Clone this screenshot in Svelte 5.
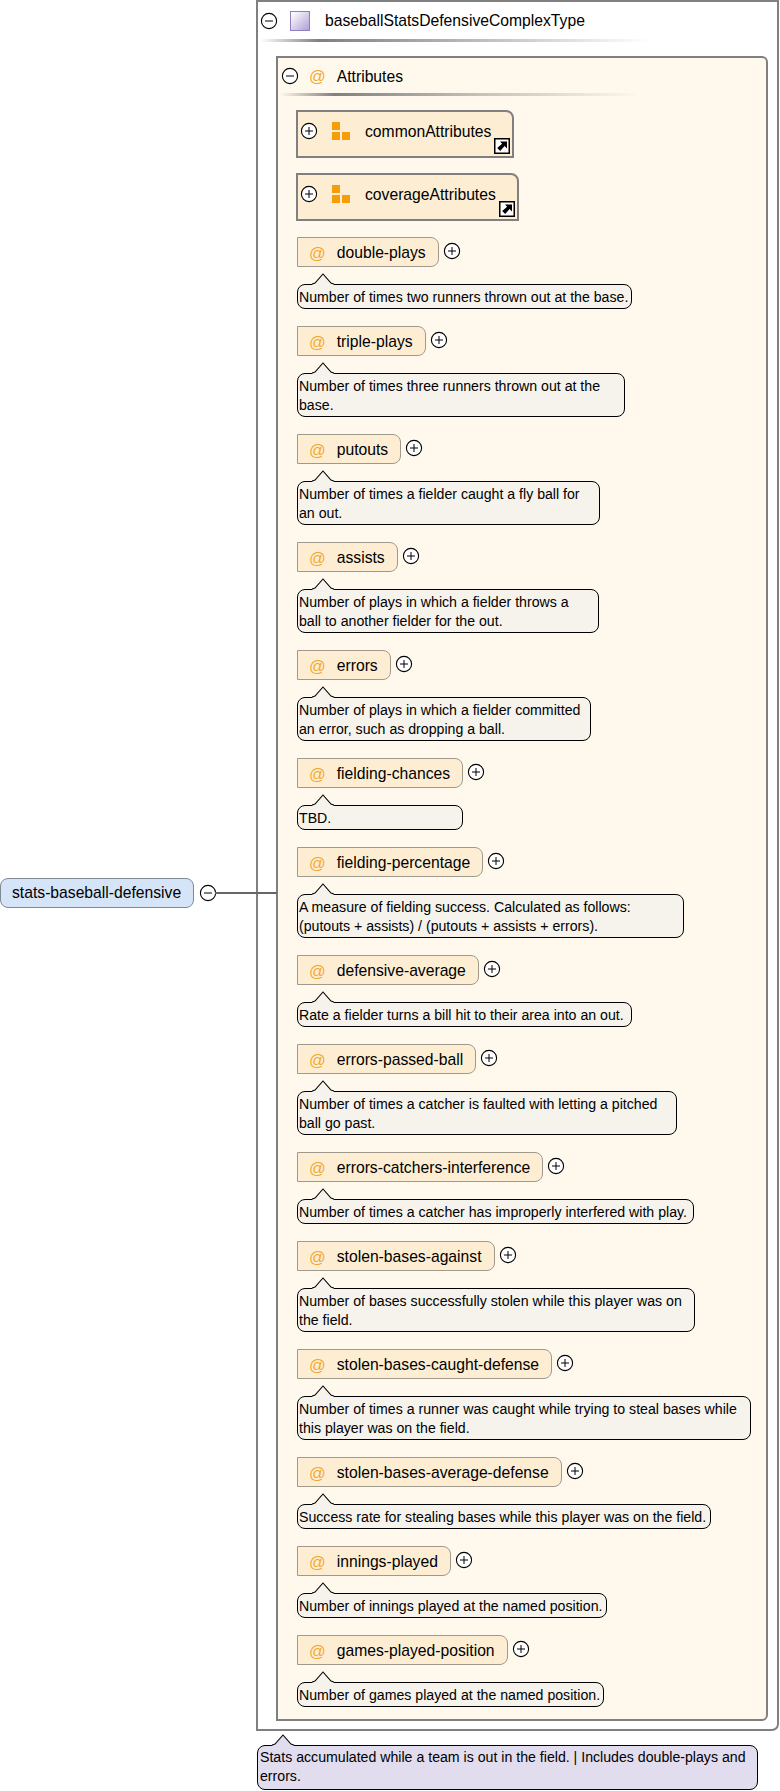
<script>
  const groups = [
    { name: 'commonAttributes' },
    { name: 'coverageAttributes' }
  ];

  // note widths come straight from the diagram, the tool sizes them itself
  const attrs = [
    { name: 'double-plays', w: 335, lines: ['Number of times two runners thrown out at the base.'] },
    { name: 'triple-plays', w: 328, lines: ['Number of times three runners thrown out at the', 'base.'] },
    { name: 'putouts', w: 303, lines: ['Number of times a fielder caught a fly ball for', 'an out.'] },
    { name: 'assists', w: 302, lines: ['Number of plays in which a fielder throws a', 'ball to another fielder for the out.'] },
    { name: 'errors', w: 294, lines: ['Number of plays in which a fielder committed', 'an error, such as dropping a ball.'] },
    { name: 'fielding-chances', w: 166, lines: ['TBD.'] },
    { name: 'fielding-percentage', w: 387, lines: ['A measure of fielding success. Calculated as follows:', '(putouts + assists) / (putouts + assists + errors).'] },
    { name: 'defensive-average', w: 335, lines: ['Rate a fielder turns a bill hit to their area into an out.'] },
    { name: 'errors-passed-ball', w: 380, lines: ['Number of times a catcher is faulted with letting a pitched', 'ball go past.'] },
    { name: 'errors-catchers-interference', w: 397, lines: ['Number of times a catcher has improperly interfered with play.'] },
    { name: 'stolen-bases-against', w: 398, lines: ['Number of bases successfully stolen while this player was on', 'the field.'] },
    { name: 'stolen-bases-caught-defense', w: 454, lines: ['Number of times a runner was caught while trying to steal bases while', 'this player was on the field.'] },
    { name: 'stolen-bases-average-defense', w: 414, lines: ['Success rate for stealing bases while this player was on the field.'] },
    { name: 'innings-played', w: 310, lines: ['Number of innings played at the named position.'] },
    { name: 'games-played-position', w: 307, lines: ['Number of games played at the named position.'] }
  ];
</script>

{#snippet toggle(open)}
  <svg class="toggle" viewBox="0 0 18 18" width="18" height="18">
    <circle cx="9" cy="9" r="7.6" fill="#fff" stroke="#000" stroke-width="1.1" />
    <path d="M5 9h8" stroke="#000" stroke-width="1" />
    {#if !open}
      <path d="M9 5v8" stroke="#000" stroke-width="1" />
    {/if}
  </svg>
{/snippet}

{#snippet tip(fill)}
  <svg class="tip" viewBox="0 0 22 12" width="22" height="12">
    <path d="M0 11.5 L3 10.5 L11 1 L19 10.5 L22 11.5 L22 12 L0 12Z" fill={fill} />
    <path d="M0 11 L3 10 L11 1 L19 10 L22 11" fill="none" stroke="#000" stroke-width="1.1" />
  </svg>
{/snippet}

<div class="diagram">
  <div class="root-node">
    <div class="element">stats-baseball-defensive</div>
    {@render toggle(true)}
    <div class="connector"></div>
  </div>

  <div class="type-col">
    <div class="type-box">
      <div class="type-head">
        {@render toggle(true)}
        <span class="type-icon"></span>
        <span class="type-name">baseballStatsDefensiveComplexType</span>
      </div>
      <div class="rule"></div>

      <div class="attr-panel">
        <div class="panel-head">
          {@render toggle(true)}
          <span class="at">@</span>
          <span class="panel-name">Attributes</span>
        </div>
        <div class="rule panel-rule"></div>

        <div class="panel-body">
          {#each groups as g}
            <div class="group">
              {@render toggle(false)}
              <svg class="group-icon" viewBox="0 0 18 18" width="18" height="18">
                <rect x="0" y="0" width="8" height="8" fill="#f59d0b" />
                <rect x="0" y="10" width="8" height="8" fill="#f59d0b" />
                <rect x="10" y="10" width="8" height="8" fill="#f59d0b" />
              </svg>
              <span class="group-name">{g.name}</span>
              <svg class="shortcut" viewBox="0 0 16 16" width="16" height="16">
                <rect x="0.75" y="0.75" width="14.5" height="14.5" fill="#fff" stroke="#000" stroke-width="1.5" />
                <path d="M6 3.5h7v7l-2.4-2.4-4.4 4.9-3-3 4.9-4.2z" fill="#000" />
              </svg>
            </div>
          {/each}

          {#each attrs as a}
            <div class="attr">
              <div class="attr-row">
                <div class="attr-box">
                  <span class="at">@</span>
                  <span>{a.name}</span>
                </div>
                {@render toggle(false)}
              </div>
              <div class="note" style="width: {a.w}px">
                {@render tip('#f6f3ec')}
                {#each a.lines as line}
                  <div>{line}</div>
                {/each}
              </div>
            </div>
          {/each}
        </div>
      </div>
    </div>

    <div class="note type-note">
      {@render tip('#e2ddee')}
      <div>Stats accumulated while a team is out in the field. | Includes double-plays and</div>
      <div>errors.</div>
    </div>
  </div>
</div>

<style>
  :global(body) {
    margin: 0;
    background: #fff;
  }

  .diagram {
    display: flex;
    align-items: flex-start;
    width: 780px;
    font-family: "Liberation Sans", Arial, sans-serif;
    font-size: 15.7px;
    color: #000;
  }

  .toggle {
    flex: none;
    display: block;
  }

  .root-node {
    position: relative;
    flex: none;
    display: flex;
    align-items: center;
    gap: 5px;
    width: 256px;
    margin-top: 878px;
  }

  .element {
    box-sizing: border-box;
    width: 194px;
    height: 30px;
    padding-left: 11px;
    line-height: 28px;
    white-space: nowrap;
    background: #d6e4f7;
    border: 1px solid #808a96;
    border-radius: 8px;
  }

  .connector {
    position: absolute;
    left: 215px;
    top: 14px;
    z-index: 2;
    width: 62px;
    height: 2px;
    background: #666;
  }

  .type-col {
    flex: none;
    width: 523px;
  }

  .type-box {
    box-sizing: border-box;
    height: 1731px;
    padding: 0 9px 0 0;
    background: #fff;
    border: 2px solid #808080;
    border-radius: 0 0 7px 0;
  }

  .type-head {
    display: flex;
    align-items: center;
    height: 37px;
    padding-left: 2px;
  }

  .type-icon {
    box-sizing: border-box;
    width: 20px;
    height: 20px;
    margin-left: 12px;
    background: linear-gradient(135deg, #fff 5%, #b3a3d6 95%);
    border: 1px solid #8f7fbc;
  }

  .type-name {
    margin-left: 15px;
  }

  .rule {
    width: 390px;
    height: 3px;
    margin-left: 2px;
    background: linear-gradient(90deg, #fff, #808080 15%, #bbb 55%, #fff);
  }

  .attr-panel {
    box-sizing: border-box;
    height: 1665px;
    margin: 14px 0 0 18px;
    background: #fff8ec;
    border: 2px solid #808080;
    border-radius: 0 6px 6px 0;
  }

  .panel-head {
    display: flex;
    align-items: center;
    height: 35px;
    padding-left: 3px;
  }

  .at {
    color: #f2a830;
    font-size: 16.5px;
  }

  .panel-head .at {
    margin: 2px 0 0 10px;
  }

  .panel-name {
    margin: 2px 0 0 11px;
  }

  .panel-rule {
    width: 360px;
    background: linear-gradient(90deg, #fff8ec, #808080 15%, #c4c0b8 55%, #fff8ec);
  }

  .panel-body {
    display: flex;
    flex-direction: column;
    align-items: flex-start;
    padding: 14px 0 0 18px;
  }

  .group {
    position: relative;
    box-sizing: border-box;
    display: flex;
    align-items: center;
    height: 48px;
    margin-bottom: 15px;
    padding: 0 21px 6px 2px;
    background: #fdeed3;
    border: 2px solid #808080;
    border-top-right-radius: 8px;
  }

  .group + .attr {
    margin-top: 1px;
  }

  .group-icon {
    margin-left: 14px;
  }

  .group-name {
    margin: 2px 0 0 15px;
    white-space: nowrap;
  }

  .shortcut {
    position: absolute;
    right: 2px;
    bottom: 2px;
  }

  .attr {
    margin: 0 0 17px 1px;
  }

  .attr:last-child {
    margin-bottom: 0;
  }

  .attr-row {
    display: flex;
    align-items: flex-start;
    gap: 4px;
  }

  .attr-row .toggle {
    margin-top: 5px;
  }

  .attr-box {
    box-sizing: border-box;
    display: flex;
    align-items: center;
    gap: 11px;
    height: 30px;
    padding: 2px 12px 0 11px;
    white-space: nowrap;
    background: #fdeed3;
    border: 1px solid #a09a8c;
    border-radius: 0 8px 8px 0;
  }

  .note {
    position: relative;
    box-sizing: border-box;
    margin-top: 17px;
    padding: 3px 1px 1px;
    font-size: 14.15px;
    line-height: 19px;
    white-space: nowrap;
    background: #f6f3ec;
    border: 1px solid #000;
    border-radius: 8px;
  }

  .tip {
    position: absolute;
    left: 14px;
    top: -12px;
  }

  .type-note {
    width: 501px;
    margin: 14px 0 0 1px;
    padding: 2px 2px 3px;
    background: #e2ddee;
  }
</style>
